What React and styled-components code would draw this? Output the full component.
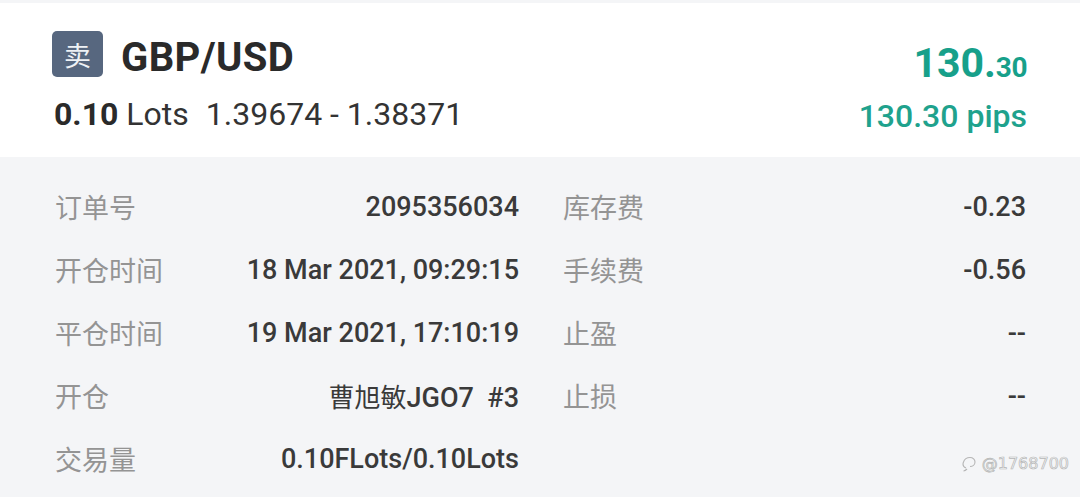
import React from "react";
import styled, { createGlobalStyle } from "styled-components";

const Global = createGlobalStyle`
  html, body { margin: 0; padding: 0; background: #f4f5f7; }
  body { font-family: Roboto, "Noto Sans CJK SC", sans-serif; }
`;

const Page = styled.div`
  width: 1080px;
  height: 497px;
  overflow: hidden;
  background: #f4f5f7;
  padding-top: 3px;
  box-sizing: border-box;
  position: relative;
`;

const Header = styled.div`
  background: #ffffff;
  height: 154px;
  box-sizing: border-box;
  padding: 28px 53px 0 52px;
  display: flex;
  justify-content: space-between;
`;

const LeftCol = styled.div`
  display: flex;
  flex-direction: column;
`;

const TitleRow = styled.div`
  display: flex;
  align-items: center;
  gap: 18px;
  height: 46px;
`;

const Badge = styled.div`
  width: 51px;
  height: 46px;
  border-radius: 5px;
  background: #57677f;
  color: #eef1f5;
  font-family: "Noto Sans CJK SC", sans-serif;
  font-size: 27px;
  display: flex;
  align-items: center;
  justify-content: center;
`;

const Symbol = styled.div`
  margin-top: 7px;
  font-family: Roboto, sans-serif;
  font-weight: 700;
  font-size: 40px;
  color: #2a2a2a;
  line-height: 46px;
  letter-spacing: 0.4px;
`;

const SubLine = styled.div`
  margin-top: 17px;
  margin-left: 2px;
  font-size: 32px;
  line-height: 40px;
  color: #333333;
  display: flex;
  gap: 17px;
  white-space: nowrap;
`;

const Strong = styled.span`
  font-weight: 700;
  color: #2a2a2a;
`;

const RightCol = styled.div`
  display: flex;
  flex-direction: column;
  align-items: flex-end;
`;

const Profit = styled.div`
  margin-top: 7px;
  color: #17a08a;
  font-weight: 700;
  font-size: 41px;
  line-height: 50px;
  white-space: nowrap;
`;

const ProfitDec = styled.span`
  font-size: 28px;
  font-weight: 700;
  letter-spacing: -0.5px;
`;

const Pips = styled.div`
  margin-top: 3px;
  color: #1fa28d;
  font-weight: 500;
  font-size: 32px;
  line-height: 40px;
  white-space: nowrap;
`;

const Body = styled.div`
  display: grid;
  grid-template-columns: 464px 463px;
  column-gap: 44px;
  padding: 18px 54px 0 55px;
`;

const Row = styled.div`
  height: 63px;
  display: flex;
  align-items: center;
  justify-content: space-between;
`;

const Label = styled.span`
  font-family: "Noto Sans CJK SC", sans-serif;
  font-size: 27px;
  color: #949494;
`;

const Value = styled.span`
  font-family: Roboto, "Noto Sans CJK SC", sans-serif;
  font-weight: 500;
  font-size: 27px;
  color: #3a3a3a;
  white-space: pre;
`;

const Cjk = styled.span`
  font-family: "Noto Sans CJK SC", sans-serif;
  font-weight: 400;
  font-size: 26px;
`;

const Watermark = styled.div`
  position: absolute;
  right: 11px;
  bottom: 24px;
  display: flex;
  align-items: center;
  gap: 5px;
  font-family: "DejaVu Sans", sans-serif;
  font-size: 16px;
  color: #f4f5f7;
  -webkit-text-stroke: 0.7px #b5b5b5;
`;

const left = [
  ["订单号", "2095356034"],
  ["开仓时间", "18 Mar 2021, 09:29:15"],
  ["平仓时间", "19 Mar 2021, 17:10:19"],
  ["开仓", <><Cjk>曹旭敏</Cjk>JGO7  #3</>],
  ["交易量", "0.10FLots/0.10Lots"],
];
const right = [
  ["库存费", "-0.23"],
  ["手续费", "-0.56"],
  ["止盈", "--"],
  ["止损", "--"],
];

export default function App() {
  const rows = [];
  for (let i = 0; i < 5; i++) {
    const l = left[i];
    const r = right[i];
    rows.push(
      <Row key={"l" + i}>
        <Label>{l[0]}</Label>
        <Value>{l[1]}</Value>
      </Row>
    );
    rows.push(
      <Row key={"r" + i}>
        {r ? (
          <>
            <Label>{r[0]}</Label>
            <Value>{r[1]}</Value>
          </>
        ) : null}
      </Row>
    );
  }
  return (
    <Page>
      <Global />
      <Header>
        <LeftCol>
          <TitleRow>
            <Badge>卖</Badge>
            <Symbol>GBP/USD</Symbol>
          </TitleRow>
          <SubLine>
            <span>
              <Strong>0.10</Strong> Lots
            </span>
            <span>1.39674 - 1.38371</span>
          </SubLine>
        </LeftCol>
        <RightCol>
          <Profit>
            130.<ProfitDec>30</ProfitDec>
          </Profit>
          <Pips>130.30 pips</Pips>
        </RightCol>
      </Header>
      <Body>{rows}</Body>
      <Watermark>
        <svg width="15" height="17" viewBox="0 0 15 17" fill="none" stroke="#b5b5b5" strokeWidth="1.1">
          <path d="M4 13c-2.5-1-3.5-3.5-2.5-6C2.5 4 5 2.5 8 2.5c3 0 5 2 5 4.5 0 2.8-2.5 4.5-5 4.5" />
          <path d="M5 14c-1 1-2 1.8-3.5 2" />
        </svg>
        <span>@1768700</span>
      </Watermark>
    </Page>
  );
}
